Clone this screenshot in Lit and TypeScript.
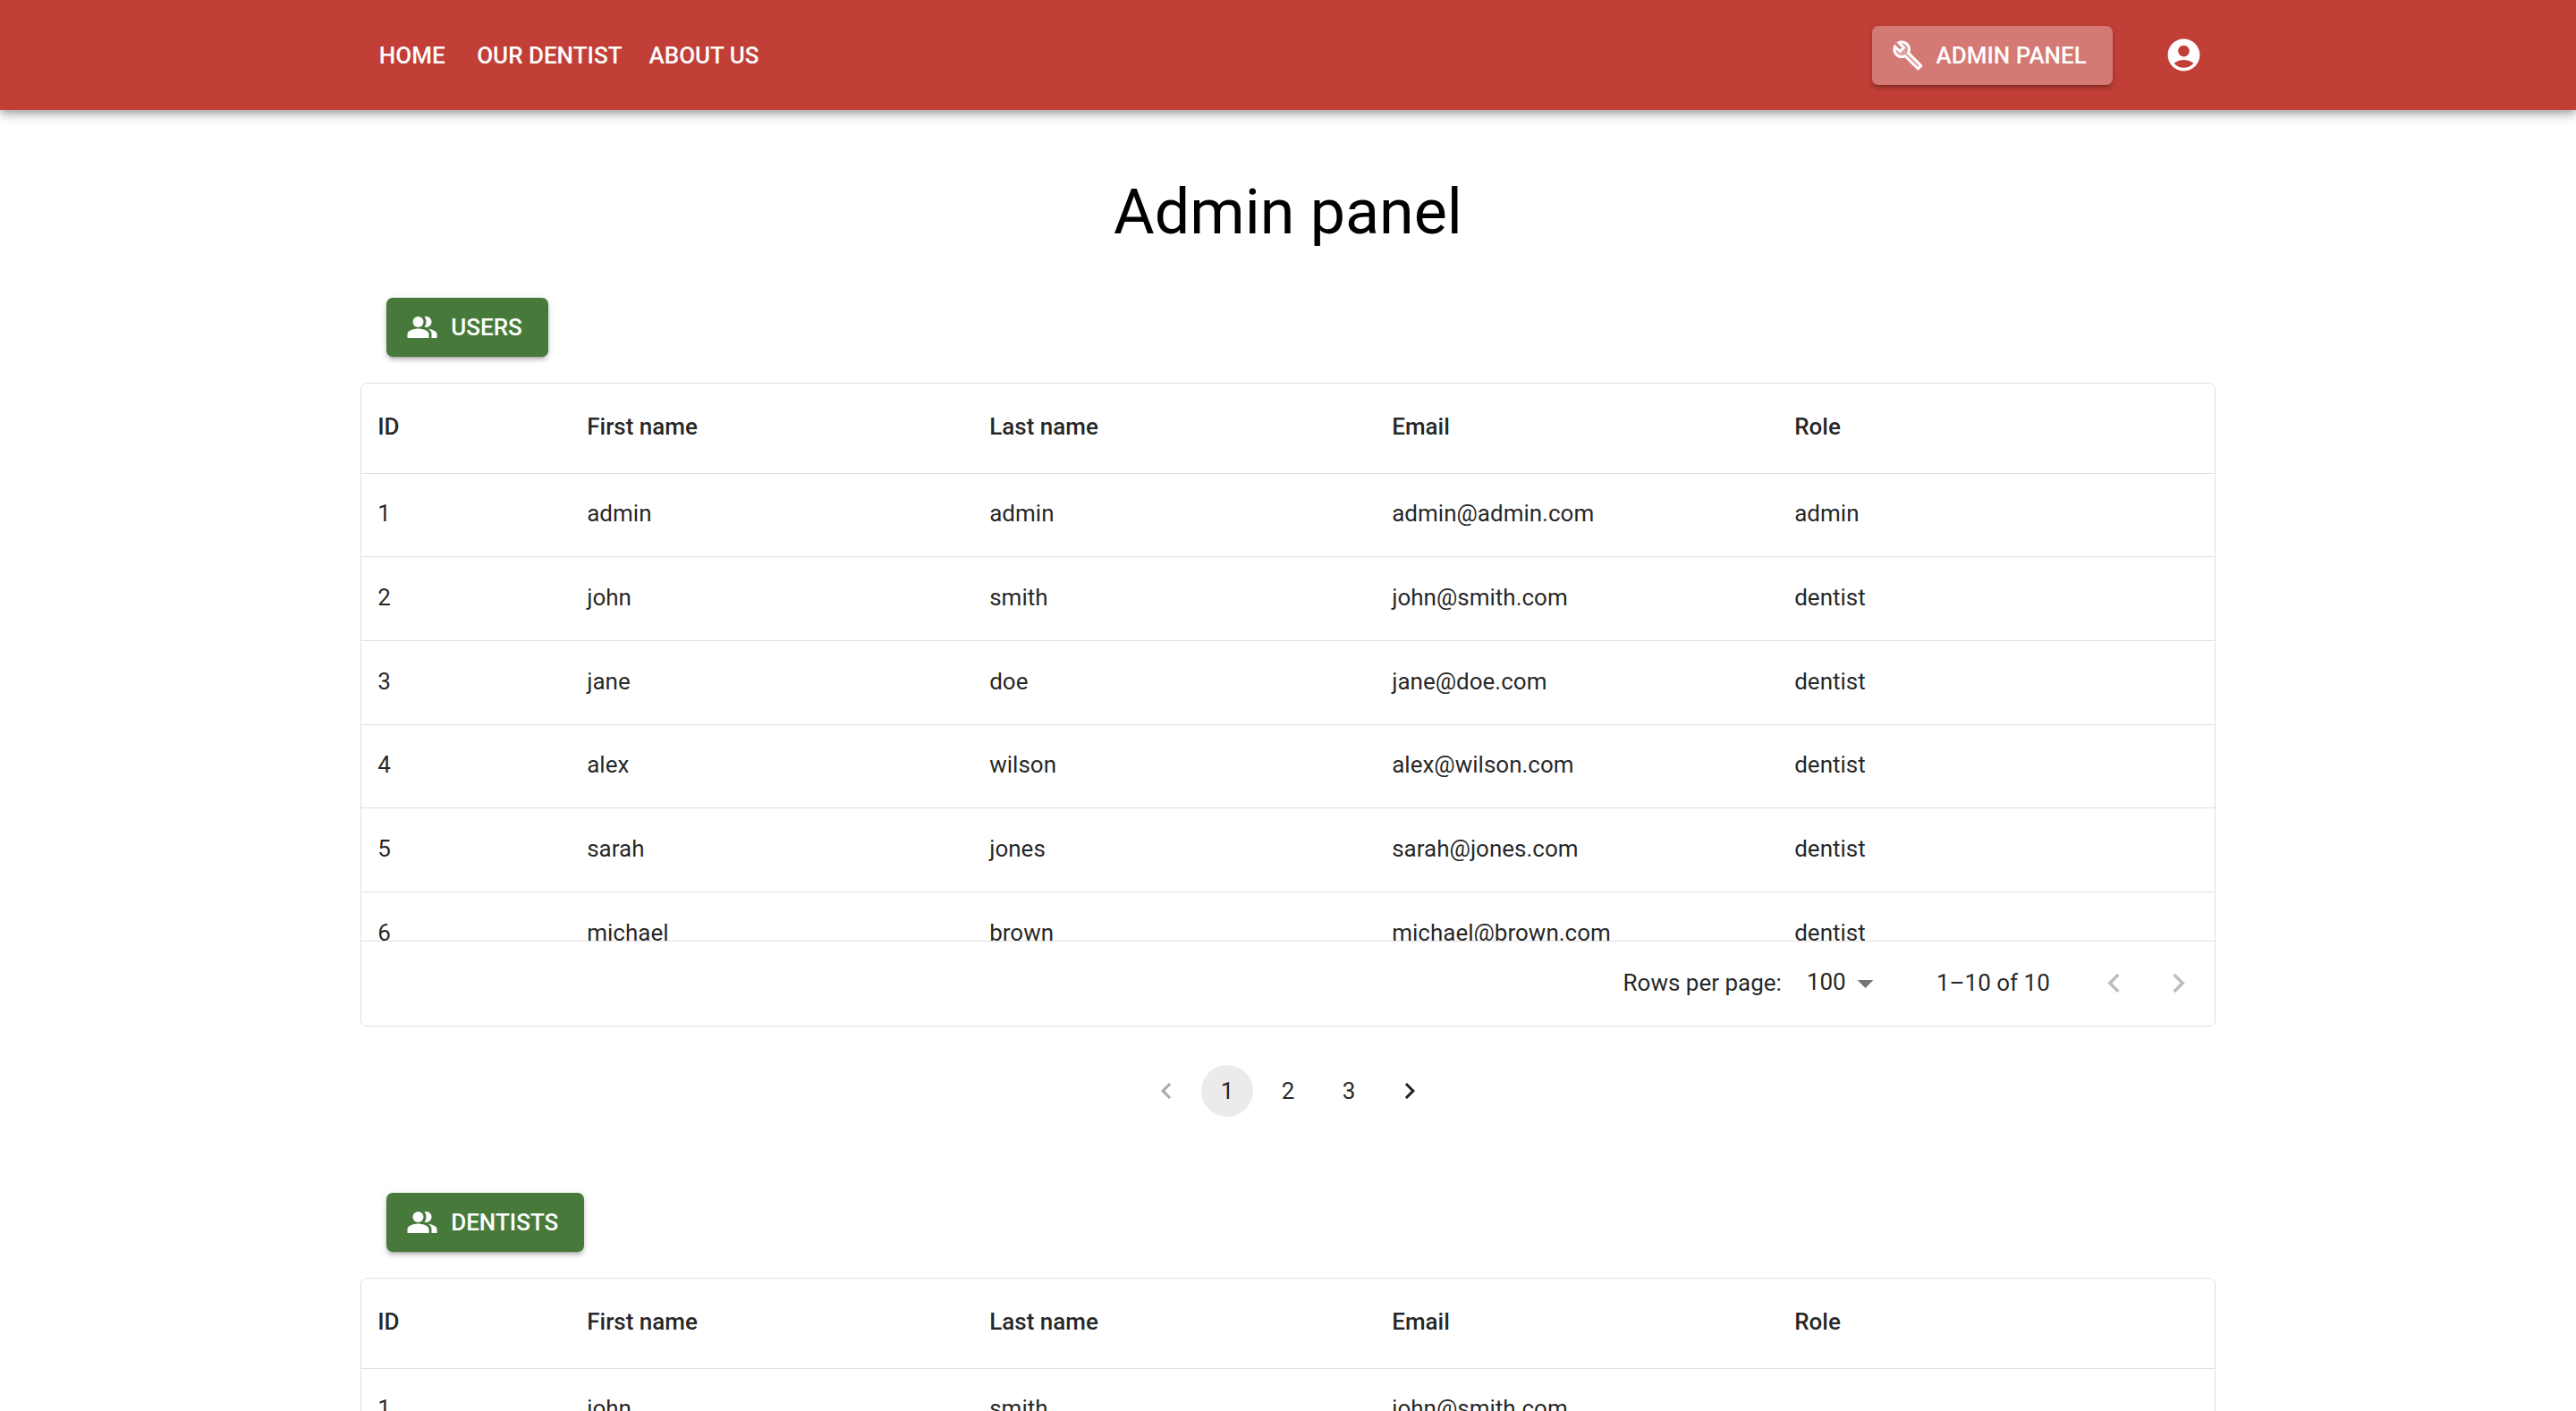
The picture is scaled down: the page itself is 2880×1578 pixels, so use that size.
import { LitElement, html, css, svg } from "lit";
import { customElement, property, state } from "lit/decorators.js";

interface Person {
  id: number;
  first: string;
  last: string;
  email: string;
  role: string;
}

const makePerson = (id: number, first: string, last: string, role: string): Person => ({
  id,
  first,
  last,
  email: `${first}@${last}.com`,
  role,
});

const users: Person[] = [
  { id: 1, first: "admin", last: "admin", email: "admin@admin.com", role: "admin" },
  makePerson(2, "john", "smith", "dentist"),
  makePerson(3, "jane", "doe", "dentist"),
  makePerson(4, "alex", "wilson", "dentist"),
  makePerson(5, "sarah", "jones", "dentist"),
  makePerson(6, "michael", "brown", "dentist"),
];

const dentists: Person[] = [makePerson(1, "john", "smith", "")];

const icons = {
  account: svg`<path d="M12 2C6.48 2 2 6.48 2 12s4.48 10 10 10 10-4.48 10-10S17.52 2 12 2zm0 4c1.93 0 3.5 1.57 3.5 3.5S13.93 13 12 13s-3.5-1.57-3.5-3.5S10.07 6 12 6zm0 14c-2.03 0-4.43-.82-6.14-2.88C7.55 15.8 9.68 15 12 15s4.45.8 6.14 2.12C16.43 19.18 14.03 20 12 20z"/>`,
  wrench: svg`<path opacity=".3" d="M19.61 20.59l-9.46-9.46c-.61.45-1.29.72-2 .82-1.36.2-2.79-.21-3.83-1.25C3.37 9.76 2.93 8.5 3 7.26l3.09 3.09 4.24-4.24-3.09-3.09c1.24-.07 2.49.37 3.44 1.31 1.08 1.08 1.49 2.57 1.24 3.96-.12.71-.42 1.37-.88 1.96l9.45 9.45-.88.89z"/><path d="M22.61 18.99l-9.08-9.08c.93-2.34.45-5.1-1.44-7C9.79.61 6.21.4 3.66 2.26L7.5 6.11 6.08 7.52 2.25 3.69C.39 6.23.6 9.82 2.9 12.11c1.86 1.86 4.57 2.35 6.89 1.48l9.11 9.11c.39.39 1.02.39 1.41 0l2.3-2.3c.4-.38.4-1.01 0-1.41zm-3 1.6l-9.46-9.46c-.61.45-1.29.72-2 .82-1.36.2-2.79-.21-3.83-1.25C3.37 9.76 2.93 8.5 3 7.26l3.09 3.09 4.24-4.24-3.09-3.09c1.24-.07 2.49.37 3.44 1.31 1.08 1.08 1.49 2.57 1.24 3.96-.12.71-.42 1.37-.88 1.96l9.45 9.45-.88.89z"/>`,
  people: svg`<path d="M16.67 13.13C18.04 14.06 19 15.32 19 17v3h4v-3c0-2.18-3.57-3.47-6.33-3.87z"/><circle cx="9" cy="8" r="4"/><path d="M15 12c2.21 0 4-1.79 4-4s-1.79-4-4-4c-.47 0-.91.1-1.33.24C14.5 5.27 15 6.58 15 8s-.5 2.73-1.33 3.76c.42.14.86.24 1.33.24zM9 13c-2.67 0-8 1.34-8 4v3h16v-3c0-2.66-5.33-4-8-4z"/>`,
  left: svg`<path d="M15.41 16.59L10.83 12l4.58-4.59L14 6l-6 6 6 6z"/>`,
  right: svg`<path d="M8.59 16.59L13.17 12 8.59 7.41 10 6l6 6-6 6z"/>`,
  drop: svg`<path d="M7 10l5 5 5-5z"/>`,
};

type IconName = keyof typeof icons;

const icon = (name: IconName, size: string) =>
  html`<svg class="icon ${size}" viewBox="0 0 24 24" aria-hidden="true">${icons[name]}</svg>`;

const shared = css`
  * {
    box-sizing: border-box;
  }
  :host {
    display: block;
    font-family: Roboto, "Liberation Sans", sans-serif;
    font-size: 26px;
    line-height: 36px;
    color: rgba(0, 0, 0, 0.87);
  }
  button,
  select {
    font: inherit;
    color: inherit;
    border: 0;
    margin: 0;
    background: none;
    cursor: pointer;
  }
  .icon {
    display: block;
    flex: none;
    fill: currentColor;
  }
  .medium {
    width: 36px;
    height: 36px;
  }
  .large {
    width: 43px;
    height: 43px;
  }
  .contained {
    display: inline-flex;
    align-items: center;
    gap: 14px;
    padding: 15px 29px 15px 22px;
    border-radius: 7px;
    font-weight: 500;
    color: #fff;
    text-transform: uppercase;
    box-shadow:
      0 5px 2px -4px rgba(0, 0, 0, 0.2),
      0 4px 4px 0 rgba(0, 0, 0, 0.14),
      0 2px 9px 0 rgba(0, 0, 0, 0.12);
  }
`;

@customElement("site-header")
export class SiteHeader extends LitElement {
  static styles = [
    shared,
    css`
      .bar {
        display: flex;
        justify-content: center;
        background: #c23f37;
        color: #fff;
        box-shadow:
          0 4px 7px -2px rgba(0, 0, 0, 0.2),
          0 7px 9px 0 rgba(0, 0, 0, 0.14),
          0 2px 18px 0 rgba(0, 0, 0, 0.12);
      }
      .inner {
        display: flex;
        align-items: center;
        justify-content: space-between;
        width: 72%;
        min-height: 123px;
      }
      .links,
      .actions {
        display: flex;
        align-items: center;
      }
      .actions {
        gap: 44px;
      }
      .link {
        min-width: 115px;
        padding: 14px 15px;
        text-align: center;
        font-weight: 500;
        color: inherit;
        text-decoration: none;
        text-transform: uppercase;
      }
      .admin {
        background: rgba(255, 255, 255, 0.3);
      }
      .profile {
        padding: 14px;
        border-radius: 50%;
      }
    `,
  ];

  render() {
    return html`
      <header class="bar">
        <div class="inner">
          <nav class="links" aria-label="Main">
            <a class="link" href="#home">Home</a>
            <a class="link" href="#dentist">Our dentist</a>
            <a class="link" href="#about">About us</a>
          </nav>
          <div class="actions">
            <button class="contained admin" type="button">${icon("wrench", "medium")}Admin panel</button>
            <button class="profile" type="button" aria-label="Account">${icon("account", "large")}</button>
          </div>
        </div>
      </header>
    `;
  }
}

@customElement("people-grid")
export class PeopleGrid extends LitElement {
  @property({ attribute: false }) rows: Person[] = [];
  @property({ type: Number }) total = 0;

  static styles = [
    shared,
    css`
      .panel {
        display: flex;
        flex-direction: column;
        height: 720px;
        border: 1px solid #e0e0e0;
        border-radius: 7px;
        overflow: hidden;
      }
      .scroller {
        flex: 1;
        min-height: 0;
        overflow: auto;
        scrollbar-width: none;
      }
      .table {
        width: 100%;
        table-layout: fixed;
        border-collapse: separate;
        border-spacing: 0;
      }
      .col-id {
        width: 234px;
      }
      .col-text {
        width: 450px;
      }
      .head,
      .cell {
        padding: 0 18px 4px;
        text-align: left;
        white-space: nowrap;
        border-bottom: 1px solid #e0e0e0;
      }
      .head {
        height: 101px;
        position: sticky;
        top: 0;
        background: #fff;
        font-weight: 500;
      }
      .cell {
        height: 94px;
      }
      .row:nth-child(3n + 1) .cell {
        height: 93px;
      }
      .footer {
        display: flex;
        align-items: center;
        justify-content: flex-end;
        height: 95px;
        padding: 0 4px 2px 0;
        border-top: 1px solid #e0e0e0;
      }
      .size {
        display: grid;
        align-items: center;
        margin: 0 58px 0 14px;
      }
      .select {
        grid-area: 1 / 1;
        appearance: none;
        padding: 0 43px 2px 14px;
      }
      .arrow {
        grid-area: 1 / 1;
        justify-self: end;
        pointer-events: none;
        color: rgba(0, 0, 0, 0.54);
      }
      .range {
        margin-right: 36px;
      }
      .step {
        width: 72px;
        padding: 14px;
        color: rgba(0, 0, 0, 0.26);
      }
    `,
  ];

  render() {
    return html`
      <div class="panel">
        <div class="scroller">
          <table class="table">
            <colgroup>
              <col class="col-id" />
              <col class="col-text" />
              <col class="col-text" />
              <col class="col-text" />
              <col class="col-text" />
              <col />
            </colgroup>
            <thead>
              <tr>
                <th class="head" scope="col">ID</th>
                <th class="head" scope="col">First name</th>
                <th class="head" scope="col">Last name</th>
                <th class="head" scope="col">Email</th>
                <th class="head" scope="col">Role</th>
                <td class="head"></td>
              </tr>
            </thead>
            <tbody>
              ${this.rows.map(
                (person) => html`
                  <tr class="row">
                    <td class="cell">${person.id}</td>
                    <td class="cell">${person.first}</td>
                    <td class="cell">${person.last}</td>
                    <td class="cell">${person.email}</td>
                    <td class="cell">${person.role}</td>
                    <td class="cell"></td>
                  </tr>
                `,
              )}
            </tbody>
          </table>
        </div>
        <div class="footer">
          <label for="page-size">Rows per page:</label>
          <span class="size">
            <select class="select" id="page-size">
              <option selected>100</option>
            </select>
            <span class="arrow">${icon("drop", "large")}</span>
          </span>
          <span class="range">1–${this.total} of ${this.total}</span>
          <button class="step" type="button" aria-label="Previous rows" disabled>${icon("left", "large")}</button>
          <button class="step" type="button" aria-label="Next rows" disabled>${icon("right", "large")}</button>
        </div>
      </div>
    `;
  }
}

@customElement("page-picker")
export class PagePicker extends LitElement {
  @state() private page = 1;

  static styles = [
    shared,
    css`
      .pages {
        display: flex;
        justify-content: center;
        gap: 10px;
      }
      .page {
        display: flex;
        align-items: center;
        justify-content: center;
        width: 58px;
        height: 58px;
        padding: 0;
        border-radius: 50%;
      }
      .page[aria-current="page"] {
        background: rgba(0, 0, 0, 0.08);
      }
      .page:disabled {
        opacity: 0.38;
      }
    `,
  ];

  render() {
    return html`
      <nav class="pages" aria-label="Pages">
        <button
          class="page"
          type="button"
          aria-label="Previous page"
          ?disabled=${this.page === 1}
          @click=${() => (this.page -= 1)}
        >
          ${icon("left", "medium")}
        </button>
        ${[1, 2, 3].map(
          (n) => html`
            <button
              class="page"
              type="button"
              aria-current=${n === this.page ? "page" : "false"}
              @click=${() => (this.page = n)}
            >
              ${n}
            </button>
          `,
        )}
        <button
          class="page"
          type="button"
          aria-label="Next page"
          ?disabled=${this.page === 3}
          @click=${() => (this.page += 1)}
        >
          ${icon("right", "medium")}
        </button>
      </nav>
    `;
  }
}

@customElement("app-root")
export class AppRoot extends LitElement {
  static styles = [
    shared,
    css`
      :host {
        height: 100vh;
        overflow: auto;
        scrollbar-width: none;
        background: #fff;
      }
      .main {
        width: 72%;
        margin: 0 auto;
        padding-top: 72px;
      }
      .title {
        margin: 0 0 54px;
        font-size: 70px;
        line-height: 84px;
        font-weight: 400;
        text-align: center;
        color: #000;
      }
      .section {
        margin-bottom: 85px;
      }
      .heading {
        margin: 0 29px 29px;
        background: #477a3a;
      }
      .picker {
        margin-top: 43px;
      }
    `,
  ];

  render() {
    return html`
      <site-header></site-header>
      <main class="main">
        <h1 class="title">Admin panel</h1>
        <section class="section">
          <button class="contained heading" type="button">${icon("people", "medium")}Users</button>
          <people-grid .rows=${users} total="10"></people-grid>
          <page-picker class="picker"></page-picker>
        </section>
        <section class="section">
          <button class="contained heading" type="button">${icon("people", "medium")}Dentists</button>
          <people-grid .rows=${dentists} total="9"></people-grid>
        </section>
      </main>
    `;
  }
}
